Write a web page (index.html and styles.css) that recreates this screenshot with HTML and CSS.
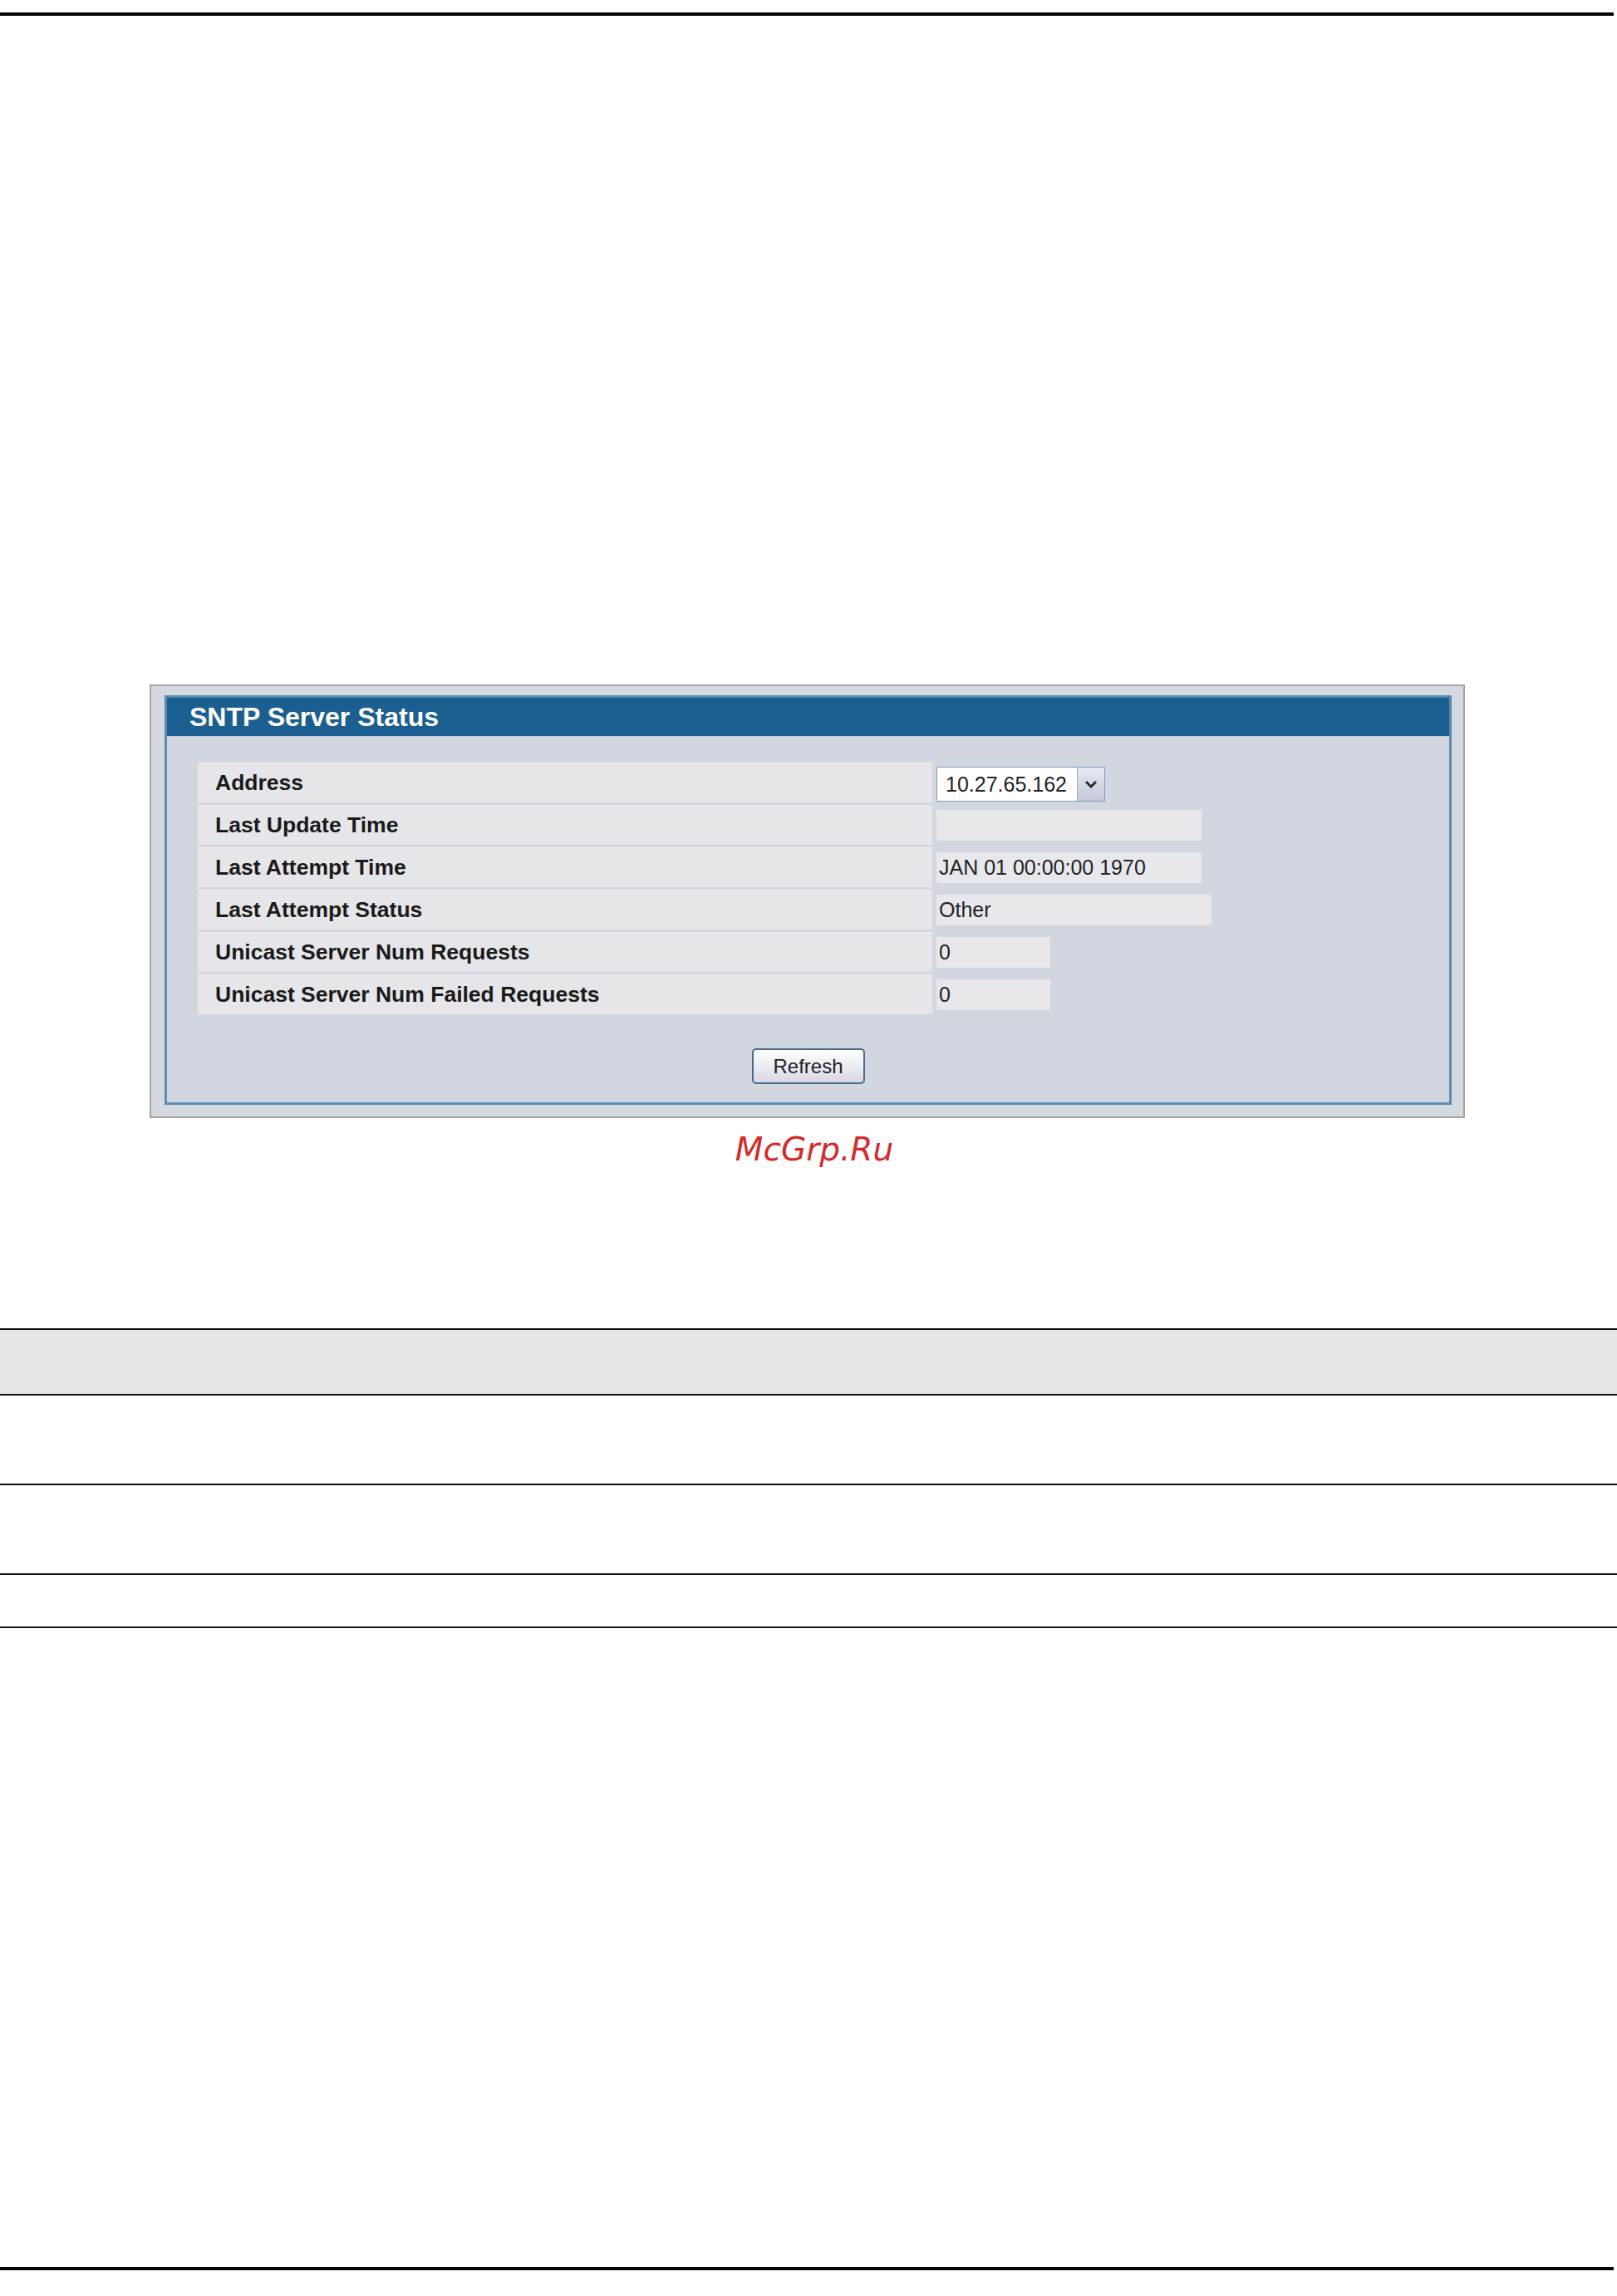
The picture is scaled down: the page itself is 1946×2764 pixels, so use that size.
FILE: index.html
```html
<!DOCTYPE html>
<html lang="en">
<head>
<meta charset="utf-8">
<title>SNTP Server Status</title>
<link rel="stylesheet" href="styles.css">
</head>
<body>
<div class="page">
  <div class="rule-thick rule-top"></div>

  <div class="panel">
    <div class="panel-inner">
      <div class="panel-title">SNTP Server Status</div>
      <div class="panel-body">
        <div class="rows">
          <div class="row">
            <div class="label">Address</div>
            <div class="value">
              <div class="select">
                <span class="select-text">10.27.65.162</span>
                <span class="select-btn">
                  <svg width="16" height="12" viewBox="0 0 16 12"><polyline points="2,3 8,9 14,3" fill="none" stroke="#2a2a33" stroke-width="3"/></svg>
                </span>
              </div>
            </div>
          </div>
          <div class="row">
            <div class="label">Last Update Time</div>
            <div class="value"><div class="box w-wide"></div></div>
          </div>
          <div class="row">
            <div class="label">Last Attempt Time</div>
            <div class="value"><div class="box w-wide">JAN 01 00:00:00 1970</div></div>
          </div>
          <div class="row">
            <div class="label">Last Attempt Status</div>
            <div class="value"><div class="box w-wider">Other</div></div>
          </div>
          <div class="row">
            <div class="label">Unicast Server Num Requests</div>
            <div class="value"><div class="box w-small">0</div></div>
          </div>
          <div class="row">
            <div class="label">Unicast Server Num Failed Requests</div>
            <div class="value"><div class="box w-small">0</div></div>
          </div>
        </div>
        <div class="actions">
          <button class="btn" type="button">Refresh</button>
        </div>
      </div>
    </div>
  </div>

  <div class="watermark">McGrp.Ru</div>

  <div class="table">
    <div class="thead"></div>
    <div class="trow tall"></div>
    <div class="trow tall"></div>
    <div class="trow short"></div>
  </div>

  <div class="rule-thick rule-bottom"></div>
</div>
</body>
</html>
```
FILE: styles.css
```css
html, body {
  margin: 0;
  padding: 0;
  background: #ffffff;
}

body {
  font-family: "Liberation Sans", Arial, sans-serif;
  width: 1946px;
}

.rule-thick {
  width: 1942px;
  height: 4px;
  background: #000000;
}

.rule-top {
  margin-top: 15px;
}

.rule-bottom {
  margin-top: 769px;
}

/* Panel */
.panel {
  box-sizing: border-box;
  margin: 805px 0 0 180px;
  width: 1583px;
  height: 522px;
  border: 2px solid #a2a4a8;
  background: #d4d8df;
  padding: 11px 14px 14px 16px;
}

.panel-inner {
  box-sizing: border-box;
  height: 100%;
  border: 3px solid #5a8bb5;
  background: #d2d6de;
  display: flex;
  flex-direction: column;
}

.panel-title {
  height: 47px;
  background: #1b5f90;
  color: #ffffff;
  font-weight: bold;
  font-size: 32px;
  padding-left: 27px;
  display: flex;
  align-items: center;
  border-bottom: 1px solid #b9c6d6;
  box-sizing: border-box;
}

.panel-body {
  flex: 1;
  padding: 31px 37px 0 37px;
}

.rows {
  display: flex;
  flex-direction: column;
  gap: 3px;
}

.row {
  display: flex;
  height: 48px;
}

.label {
  box-sizing: border-box;
  width: 884px;
  background: #e6e6ea;
  border-top: 1px solid #eeeef1;
  color: #1a1a1a;
  font-weight: bold;
  font-size: 26.5px;
  padding-left: 21px;
  display: flex;
  align-items: center;
}

.value {
  margin-left: 5px;
  display: flex;
  align-items: center;
}

.box {
  box-sizing: border-box;
  height: 37px;
  background: #e8e8ec;
  color: #222222;
  font-size: 25px;
  padding-left: 3px;
  display: flex;
  align-items: center;
}

.w-wide { width: 319px; }
.w-wider { width: 331px; }
.w-small { width: 137px; }

.select {
  box-sizing: border-box;
  width: 203px;
  height: 42px;
  margin-top: 4px;
  border: 1px solid #7f9cbb;
  background: #ffffff;
  display: flex;
}

.select-text {
  flex: 1;
  padding-left: 10px;
  font-size: 25px;
  color: #222222;
  display: flex;
  align-items: center;
}

.select-btn {
  width: 32px;
  background: linear-gradient(#e6e9f0, #c3c9d7);
  border-left: 1px solid #9eadc6;
  display: flex;
  align-items: center;
  justify-content: center;
}

.actions {
  display: flex;
  justify-content: center;
  margin-top: 41px;
}

.btn {
  box-sizing: border-box;
  width: 136px;
  height: 43px;
  padding: 0;
  border: 2px solid #4d6b8b;
  border-radius: 5px;
  background: linear-gradient(#ffffff, #d8d8e5);
  font-family: "Liberation Sans", Arial, sans-serif;
  font-size: 24px;
  color: #222222;
}

/* Watermark */
.watermark {
  margin-top: 15px;
  padding-left: 14px;
  text-align: center;
  font-family: "DejaVu Sans", sans-serif;
  font-style: italic;
  font-size: 39px;
  line-height: 45px;
  color: #d42a2a;
}

/* Empty table */
.table {
  margin-top: 193px;
  border-top: 2px solid #111111;
}

.thead {
  height: 77px;
  background: #e6e6e6;
  border-bottom: 2px solid #111111;
}

.trow {
  border-bottom: 2px solid #111111;
}

.trow.tall { height: 106px; }
.trow.short { height: 62px; }
```
